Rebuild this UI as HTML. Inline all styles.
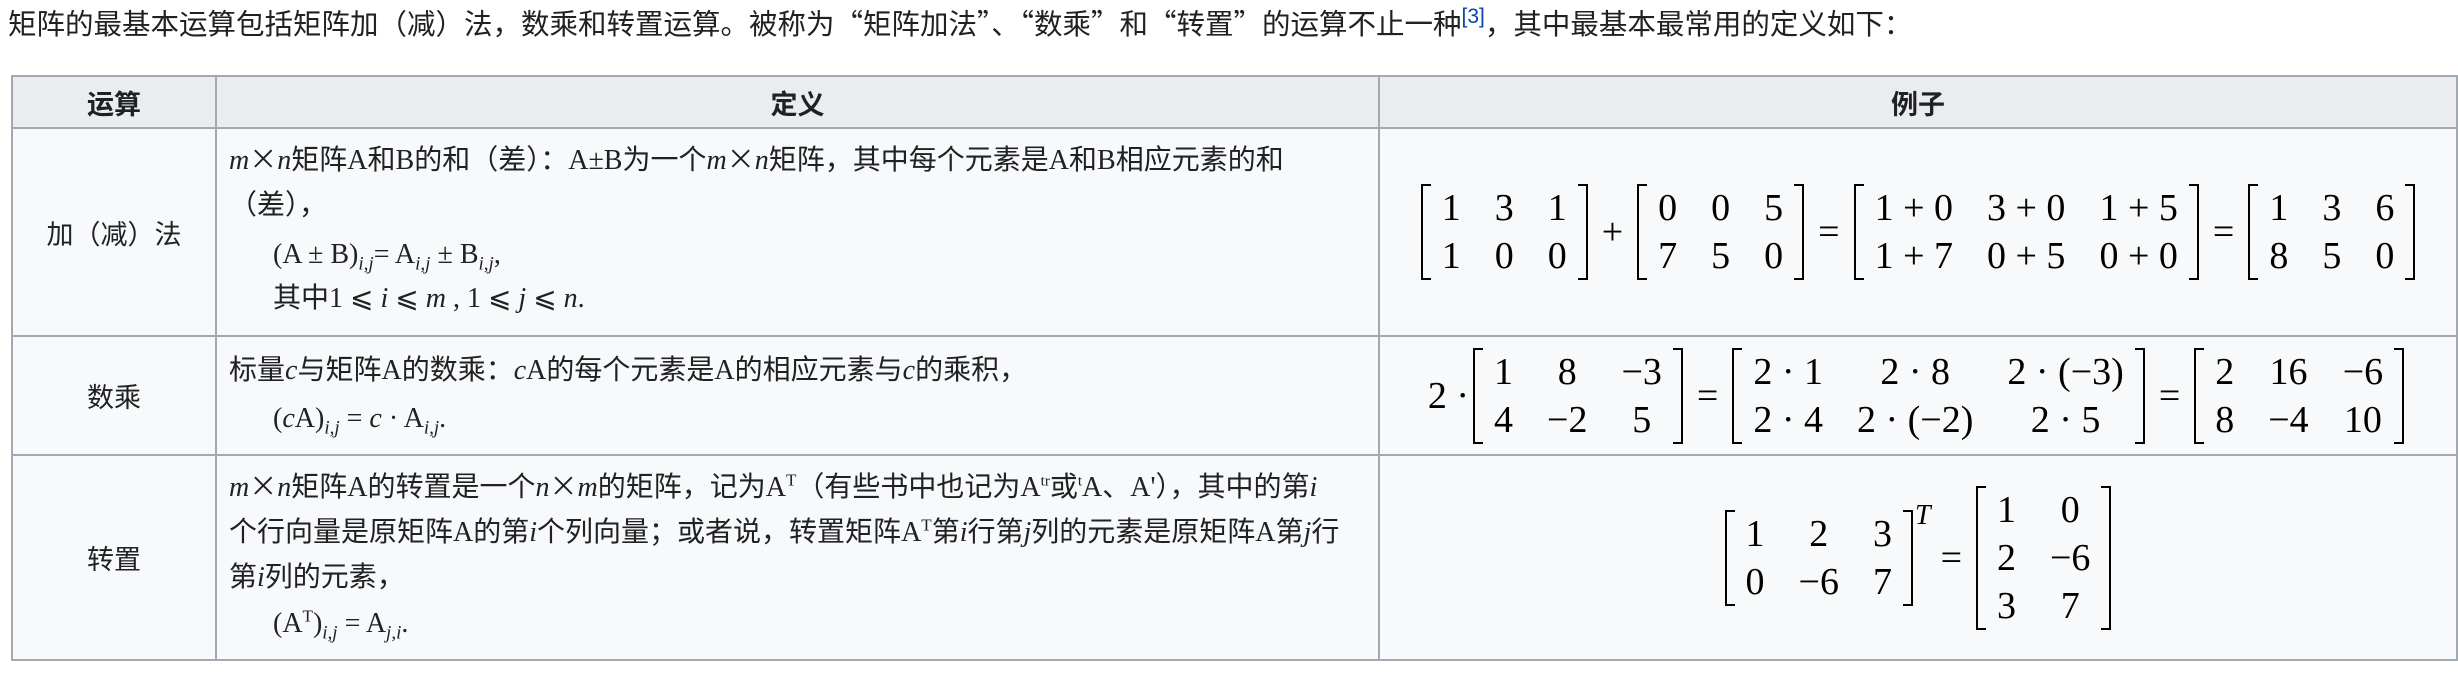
<!DOCTYPE html>
<html><head><meta charset="utf-8">
<style>
html,body{margin:0;padding:0;background:#fff;}
body{width:2458px;height:678px;overflow:hidden;position:relative;color:#202122;font-family:"Liberation Sans","Noto Sans CJK SC",sans-serif;font-size:28px;}
sup{line-height:0;}
.intro{position:absolute;left:8px;top:6px;line-height:34px;white-space:nowrap;font-family:"Noto Sans CJK SC","Liberation Sans",sans-serif;font-size:28.5px;}
.intro sup{color:#0645ad;font-size:21px;vertical-align:11px;line-height:0;font-family:"Liberation Sans",sans-serif;}
table.w{position:absolute;left:11px;top:75px;border-collapse:collapse;table-layout:fixed;}
.w > tbody > tr > td,.w > tbody > tr > th{border:2px solid #a2a9b1;padding:0;background:#f8f9fa;}
.w > tbody > tr > th{background:#eaecf0;font-weight:bold;text-align:center;height:50px;font-family:"Noto Sans CJK SC",sans-serif;font-size:27px;}
.c1{text-align:center;font-family:"Noto Sans CJK SC",sans-serif;font-size:27px;}
.w > tbody > tr > td.def{vertical-align:top;padding-left:12px;white-space:nowrap;font-size:28px;font-family:"Noto Sans CJK SC","Liberation Serif",sans-serif;}
.def p{margin:0;line-height:42px;}
.def .f{padding-left:44px;line-height:44px;font-family:"Liberation Serif","Noto Sans CJK SC",serif;}
.s{font-family:"Liberation Serif",serif;}
i{font-family:"Liberation Serif",serif;}
sub{font-size:19px;line-height:0;}
.ex{text-align:center;vertical-align:middle;}
.m{display:inline-flex;align-items:center;font-family:"Liberation Serif",serif;font-size:38px;color:#000;vertical-align:middle;}
.mx{position:relative;display:inline-block;padding:0 4px;margin:0 4px;}
.mx:before,.mx:after{content:"";position:absolute;top:0;bottom:0;width:8px;border:2.5px solid #000;}
.mx:before{left:0;border-right:none;}
.mx:after{right:0;border-left:none;}
.mx table{border-collapse:collapse;}
.mx table td{padding:0 17px;line-height:48px;text-align:center;white-space:nowrap;border:none;background:none;}
.op{margin:0 10px;}
</style></head><body>
<div class="intro">矩阵的最基本运算包括矩阵加（减）法，数乘和转置运算。被称为“矩阵加法”、“数乘”和“转置”的运算不止一种<sup>[3]</sup>，其中最基本最常用的定义如下：</div>
<table class="w">
<colgroup><col style="width:204px"><col style="width:1163px"><col style="width:1078px"></colgroup>
<tr><th>运算</th><th>定义</th><th>例子</th></tr>
<tr style="height:208px"><td class="c1">加（减）法</td>
<td class="def" style="padding-top:8px">
<p><i>m</i>×<i>n</i>矩阵<span class="s">A</span>和<span class="s">B</span>的和（差）：<span class="s">A±B</span>为一个<i>m</i>×<i>n</i>矩阵，其中每个元素是<span class="s">A</span>和<span class="s">B</span>相应元素的和<br>（差），</p>
<div class="f" style="margin-top:9px">(A ± B)<sub><i>i,j</i></sub>= A<sub><i>i,j</i></sub> ± B<sub><i>i,j</i></sub>,</div>
<div class="f">其中1 ⩽ <i>i</i> ⩽ <i>m</i> , 1 ⩽ <i>j</i> ⩽ <i>n</i>.</div>
</td>
<td class="ex"><span class="m">
<span class="mx"><table><tr><td>1</td><td>3</td><td>1</td></tr><tr><td>1</td><td>0</td><td>0</td></tr></table></span>
<span class="op">+</span>
<span class="mx"><table><tr><td>0</td><td>0</td><td>5</td></tr><tr><td>7</td><td>5</td><td>0</td></tr></table></span>
<span class="op">=</span>
<span class="mx"><table><tr><td>1 + 0</td><td>3 + 0</td><td>1 + 5</td></tr><tr><td>1 + 7</td><td>0 + 5</td><td>0 + 0</td></tr></table></span>
<span class="op">=</span>
<span class="mx"><table><tr><td>1</td><td>3</td><td>6</td></tr><tr><td>8</td><td>5</td><td>0</td></tr></table></span>
</span></td></tr>
<tr style="height:119px"><td class="c1">数乘</td>
<td class="def" style="padding-top:10px">
<p>标量<i>c</i>与矩阵<span class="s">A</span>的数乘：<i>c</i><span class="s">A</span>的每个元素是<span class="s">A</span>的相应元素与<i>c</i>的乘积，</p>
<div class="f" style="margin-top:5px">(<i>c</i>A)<sub><i>i,j</i></sub> = <i>c</i> · A<sub><i>i,j</i></sub>.</div>
</td>
<td class="ex"><span class="m">
<span>2 ·</span>
<span class="mx"><table><tr><td>1</td><td>8</td><td>−3</td></tr><tr><td>4</td><td>−2</td><td>5</td></tr></table></span>
<span class="op">=</span>
<span class="mx"><table><tr><td>2 · 1</td><td>2 · 8</td><td>2 · (−3)</td></tr><tr><td>2 · 4</td><td>2 · (−2)</td><td>2 · 5</td></tr></table></span>
<span class="op">=</span>
<span class="mx"><table><tr><td>2</td><td>16</td><td>−6</td></tr><tr><td>8</td><td>−4</td><td>10</td></tr></table></span>
</span></td></tr>
<tr style="height:205px"><td class="c1">转置</td>
<td class="def" style="padding-top:8px">
<p style="line-height:43px"><i>m</i>×<i>n</i>矩阵<span class="s">A</span>的转置是一个<i>n</i>×<i>m</i>的矩阵，记为<span class="s">A<sup style="font-size:17px">T</sup></span>（有些书中也记为<span class="s">A<sup style="font-size:15px">tr</sup></span>或<span class="s"><sup style="font-size:15px">t</sup>A</span>、<span class="s">A'</span>），其中的第<i>i</i><br>个行向量是原矩阵<span class="s">A</span>的第<i>i</i>个列向量；或者说，转置矩阵<span class="s">A<sup style="font-size:17px">T</sup></span>第<i>i</i>行第<i>j</i>列的元素是原矩阵<span class="s">A</span>第<i>j</i>行<br>第<i>i</i>列的元素，</p>
<div class="f" style="margin-top:3px">(A<sup style="font-size:17px">T</sup>)<sub><i>i,j</i></sub> = A<sub><i>j,i</i></sub>.</div>
</td>
<td class="ex"><span class="m">
<span class="mx"><table><tr><td>1</td><td>2</td><td>3</td></tr><tr><td>0</td><td>−6</td><td>7</td></tr></table></span><span style="font-style:italic;font-size:28px;align-self:flex-start;margin-top:14px;margin-left:-2px">T</span>
<span class="op">=</span>
<span class="mx"><table><tr><td>1</td><td>0</td></tr><tr><td>2</td><td>−6</td></tr><tr><td>3</td><td>7</td></tr></table></span>
</span></td></tr>
</table>
</body></html>
